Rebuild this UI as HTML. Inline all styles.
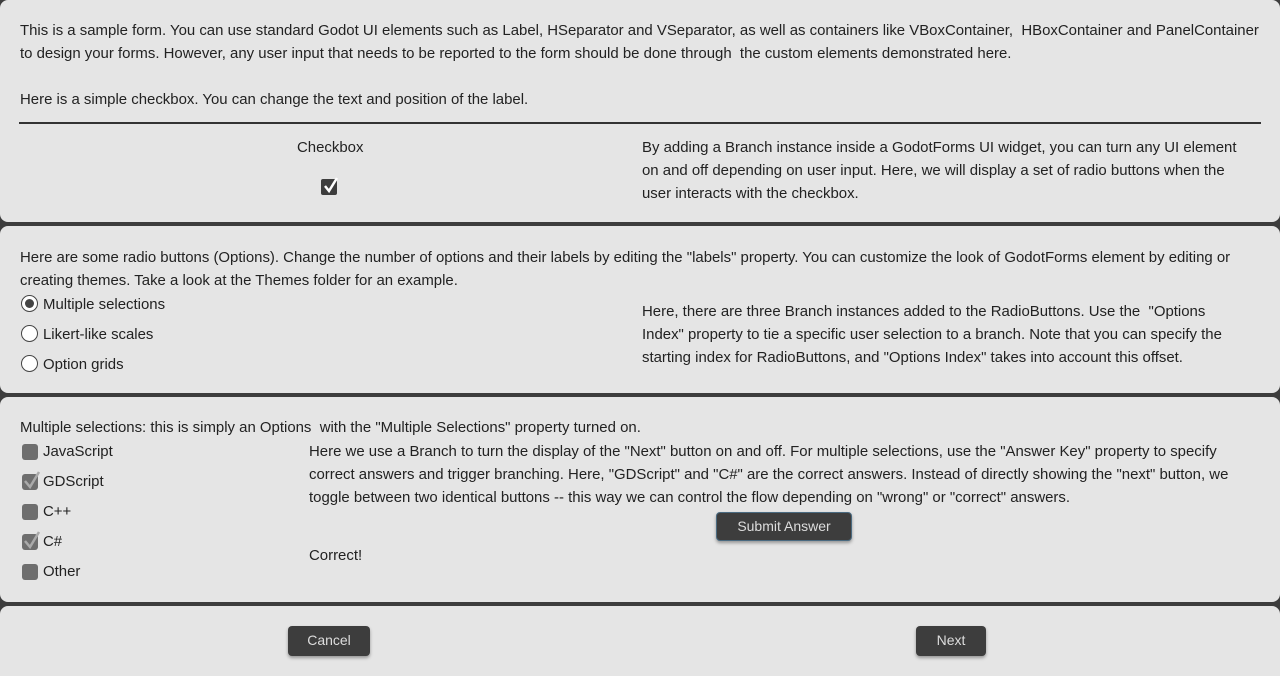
<!DOCTYPE html>
<html><head><meta charset="utf-8"><style>
html,body{margin:0;height:676px;overflow:hidden}
body{width:1280px;background:#3d3d3d;font-family:"Liberation Sans",sans-serif;font-size:14.95px;color:#222;position:relative}
.p{position:absolute;left:0;width:1280px;background:#e5e5e5;border-radius:8px}
.t{position:absolute;white-space:nowrap;line-height:23px}
.rad{position:absolute;width:17px;height:17px;border:1.5px solid #444;border-radius:50%;background:#fff;box-sizing:border-box}
.rad.on::after{content:"";position:absolute;left:2.5px;top:2.5px;width:9px;height:9px;border-radius:50%;background:#444}
.cb{position:absolute;width:16px;height:16px;background:#6e6e6e;border-radius:3px}
.ck{position:absolute;left:1px;top:-4px}
.btn{position:absolute;background:#3d3d3d;color:#ddd;border-radius:4px;text-align:center;font-size:14px;box-shadow:0 2px 3px rgba(0,0,0,.35)}
</style></head><body>
<div class="p" style="top:0;height:222px">
<div class="t" style="left:20px;top:19px">This is a sample form. You can use standard Godot UI elements such as Label, HSeparator and VSeparator, as well as containers like VBoxContainer,&nbsp; HBoxContainer and PanelContainer</div>
<div class="t" style="left:20px;top:42px">to design your forms. However, any user input that needs to be reported to the form should be done through&nbsp; the custom elements demonstrated here.</div>
<div class="t" style="left:20px;top:88px">Here is a simple checkbox. You can change the text and position of the label.</div>
<div style="position:absolute;left:19px;top:122px;width:1242px;height:2px;background:#333"></div>
<div class="t" style="left:297px;top:136px">Checkbox</div>
<div style="position:absolute;left:321px;top:179px;width:16px;height:16px;background:#3d3d3d;border-radius:2px"><svg class="ck" width="20" height="20" viewBox="0 0 20 20"><path d="M3 11 L7 16 L15 3" stroke="#fff" stroke-width="2.5" fill="none"/></svg></div>
<div class="t" style="left:642px;top:136px">By adding a Branch instance inside a GodotForms UI widget, you can turn any UI element</div>
<div class="t" style="left:642px;top:159px">on and off depending on user input. Here, we will display a set of radio buttons when the</div>
<div class="t" style="left:642px;top:182px">user interacts with the checkbox.</div>
</div>
<div class="p" style="top:226px;height:167px">
<div class="t" style="left:20px;top:20px">Here are some radio buttons (Options). Change the number of options and their labels by editing the "labels" property. You can customize the look of GodotForms element by editing or</div>
<div class="t" style="left:20px;top:43px">creating themes. Take a look at the Themes folder for an example.</div>
<div class="rad on" style="left:21px;top:69px"></div><div class="t" style="left:43px;top:67px">Multiple selections</div>
<div class="rad" style="left:21px;top:99px"></div><div class="t" style="left:43px;top:97px">Likert-like scales</div>
<div class="rad" style="left:21px;top:129px"></div><div class="t" style="left:43px;top:127px">Option grids</div>
<div class="t" style="left:642px;top:74px">Here, there are three Branch instances added to the RadioButtons. Use the&nbsp; "Options</div>
<div class="t" style="left:642px;top:97px">Index" property to tie a specific user selection to a branch. Note that you can specify the</div>
<div class="t" style="left:642px;top:120px">starting index for RadioButtons, and "Options Index" takes into account this offset.</div>
</div>
<div class="p" style="top:397px;height:205px">
<div class="t" style="left:20px;top:19px">Multiple selections: this is simply an Options&nbsp; with the "Multiple Selections" property turned on.</div>
<div class="cb" style="left:22px;top:47px"></div><div class="t" style="left:43px;top:43px">JavaScript</div>
<div class="cb" style="left:22px;top:77px"><svg class="ck" width="20" height="20" viewBox="0 0 20 20"><path d="M2 11 L7 17 L16 2" stroke="#aaa" stroke-width="2.5" fill="none"/></svg></div><div class="t" style="left:43px;top:73px">GDScript</div>
<div class="cb" style="left:22px;top:107px"></div><div class="t" style="left:43px;top:103px">C++</div>
<div class="cb" style="left:22px;top:137px"><svg class="ck" width="20" height="20" viewBox="0 0 20 20"><path d="M2 11 L7 17 L16 2" stroke="#aaa" stroke-width="2.5" fill="none"/></svg></div><div class="t" style="left:43px;top:133px">C#</div>
<div class="cb" style="left:22px;top:167px"></div><div class="t" style="left:43px;top:163px">Other</div>
<div class="t" style="left:309px;top:43px">Here we use a Branch to turn the display of the "Next" button on and off. For multiple selections, use the "Answer Key" property to specify</div>
<div class="t" style="left:309px;top:66px">correct answers and trigger branching. Here, "GDScript" and "C#" are the correct answers. Instead of directly showing the "next" button, we</div>
<div class="t" style="left:309px;top:89px">toggle between two identical buttons -- this way we can control the flow depending on "wrong" or "correct" answers.</div>
<div class="btn" style="left:716px;top:115px;width:136px;height:29px;line-height:27px;border:1px solid #4a6a80;box-sizing:border-box">Submit Answer</div>
<div class="t" style="left:309px;top:147px">Correct!</div>
</div>
<div class="p" style="top:606px;height:80px">
<div class="btn" style="left:288px;top:20px;width:82px;height:30px;line-height:28px">Cancel</div>
<div class="btn" style="left:916px;top:20px;width:70px;height:30px;line-height:28px">Next</div>
</div>
</body></html>
